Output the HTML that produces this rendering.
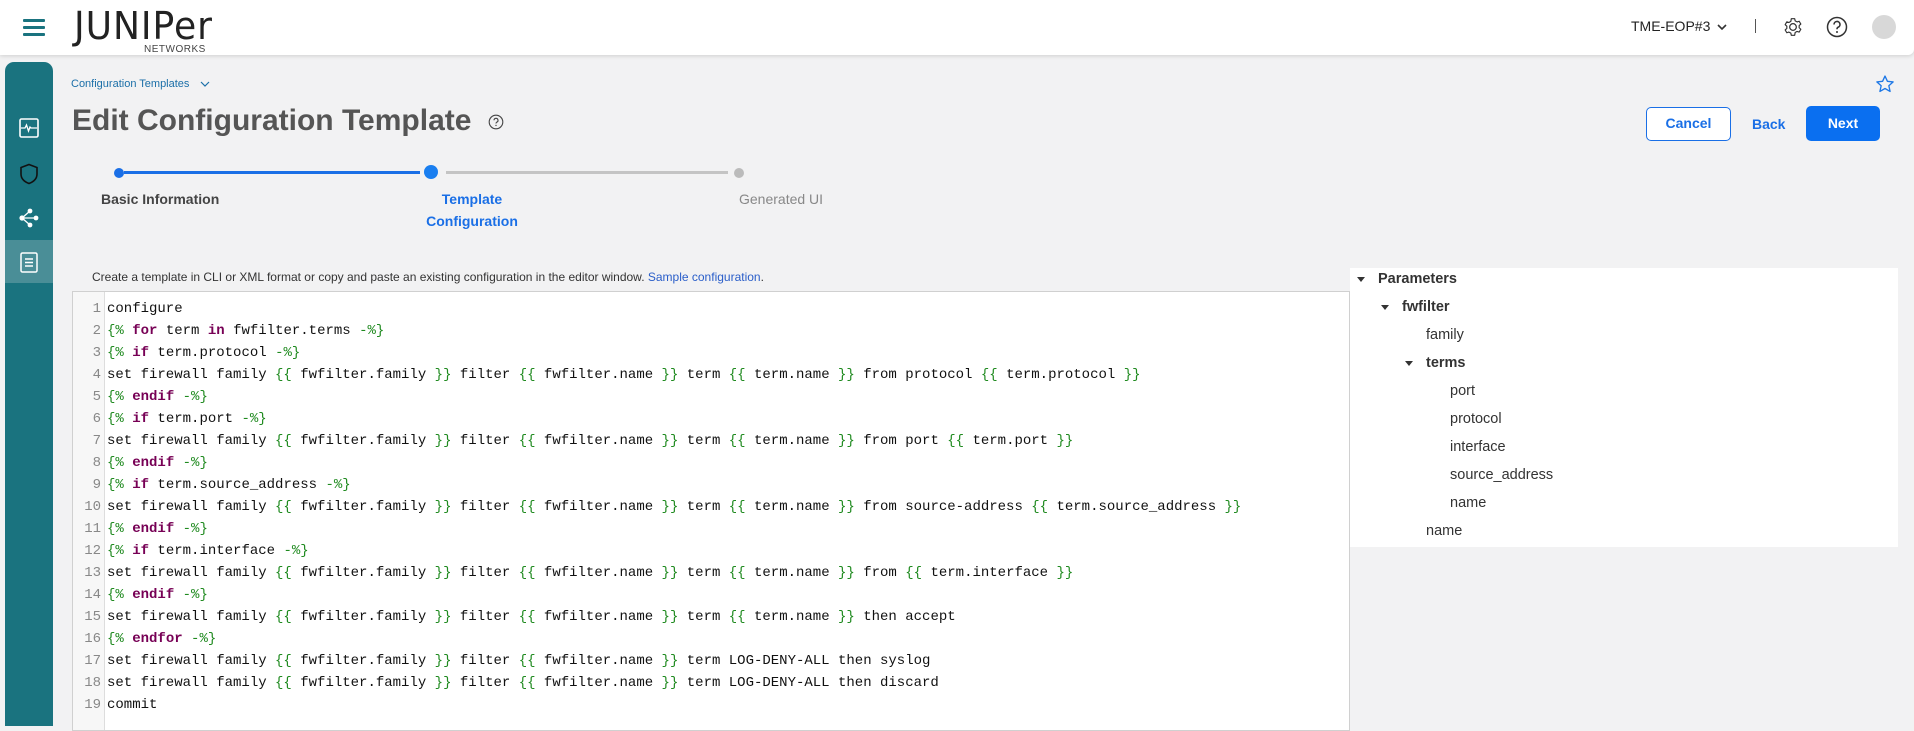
<!DOCTYPE html>
<html><head><meta charset="utf-8">
<style>
*{margin:0;padding:0;box-sizing:border-box}
body{width:1914px;height:726px;overflow:hidden;background:#f2f2f3;font-family:"Liberation Sans","DejaVu Sans",sans-serif;color:#333;position:relative}
.hdr{position:absolute;left:0;top:0;width:1914px;height:55px;background:#fff;box-shadow:0 1px 4px rgba(0,0,0,.15);border-bottom-right-radius:6px}
.abs{position:absolute}
.side{position:absolute;left:5px;top:62px;width:48px;height:664px;background:#1a737f;border-top-left-radius:9px;border-top-right-radius:9px}
.band{position:absolute;left:0;top:178px;width:48px;height:43px;background:#4a8e97}
.code{position:absolute;left:72px;top:291px;width:1278px;height:440px;background:#fff;border:1px solid #d0d0d0}
.gut{position:absolute;left:0;top:0;width:32px;height:100%;background:#f7f7f7;border-right:1px solid #ddd}
.ln{position:absolute;left:0;width:28px;text-align:right;font-family:"Liberation Mono",monospace;font-size:14px;color:#888;line-height:22px}
.cl{position:absolute;left:34px;font-family:"Liberation Mono",monospace;font-size:14px;color:#111;line-height:22px;white-space:pre}
.g{color:#1f8a1f}.k{color:#770055;font-weight:bold}
.tree{position:absolute;left:1350px;top:268px;width:548px;height:279px;background:#fff}
.ti{position:absolute;font-size:14.5px;color:#333;line-height:20px}
.tri{position:absolute;width:0;height:0;border-left:4px solid transparent;border-right:4px solid transparent;border-top:5px solid #333}
</style></head><body>
<div class="hdr">
  <div class="abs" style="left:23px;top:19px;width:22px;height:3px;background:#1a737f;border-radius:1px"></div>
  <div class="abs" style="left:23px;top:26px;width:22px;height:3px;background:#1a737f;border-radius:1px"></div>
  <div class="abs" style="left:23px;top:33px;width:22px;height:3px;background:#1a737f;border-radius:1px"></div>
  <div class="abs" style="left:74px;top:4px;font-size:38px;letter-spacing:1px;color:#222;transform:scaleX(0.95);transform-origin:left;font-family:'DejaVu Sans',sans-serif;font-weight:normal">JUNIPer</div>
  <div class="abs" style="left:144px;top:44px;font-size:10px;color:#444;letter-spacing:0.5px">NETWORKS</div>
  <div class="abs" style="left:1631px;top:18px;font-size:14px;color:#222">TME-EOP#3</div>
  <svg class="abs" style="left:1716px;top:22px" width="12" height="10"><path d="M2 3 L6 7 L10 3" fill="none" stroke="#333" stroke-width="1.6"/></svg>
  <div class="abs" style="left:1755px;top:19px;width:1px;height:14px;background:#555"></div>
  <svg class="abs" style="left:1783px;top:17px" width="20" height="20" viewBox="0 0 24 24"><path d="M12 8a4 4 0 1 0 0 8a4 4 0 1 0 0-8z" fill="none" stroke="#333" stroke-width="1.5"/><path d="M10 2h4l.6 2.6 2.3 1.3 2.5-.8 2 3.4-2 1.8v2.6l2 1.8-2 3.4-2.5-.8-2.3 1.3L14 22h-4l-.6-2.6-2.3-1.3-2.5.8-2-3.4 2-1.8V11l-2-1.8 2-3.4 2.5.8 2.3-1.3z" fill="none" stroke="#333" stroke-width="1.4" stroke-linejoin="round"/></svg>
  <svg class="abs" style="left:1826px;top:16px" width="22" height="22" viewBox="0 0 22 22"><circle cx="11" cy="11" r="9.5" fill="none" stroke="#333" stroke-width="1.5"/><path d="M8 8.5a3 3 0 1 1 4 2.8c-.8.4-1 1-1 1.9" fill="none" stroke="#333" stroke-width="1.6"/><circle cx="11" cy="16" r="1" fill="#333"/></svg>
  <div class="abs" style="left:1872px;top:15px;width:24px;height:24px;border-radius:50%;background:#d8d8d8"></div>
</div>
<div class="side">
  <div class="band"></div>
  <svg class="abs" style="left:14px;top:56px" width="20" height="20" viewBox="0 0 20 20"><rect x="1" y="1" width="18" height="18" rx="1.5" fill="none" stroke="#fff" stroke-width="1.6"/><path d="M2 10h4l1.5-3 2 6 1.5-4 1 1h6" fill="none" stroke="#fff" stroke-width="1.3"/></svg>
  <svg class="abs" style="left:14px;top:101px" width="20" height="22" viewBox="0 0 20 22"><path d="M10 1.5 L18 4.5 V11 C18 16 14 19 10 20.5 C6 19 2 16 2 11 V4.5 Z" fill="none" stroke="#111" stroke-width="1.6"/></svg>
  <svg class="abs" style="left:13px;top:145px" width="22" height="22" viewBox="0 0 22 22"><path d="M4 11 L12 4 M4 11 L18 11 M4 11 L12 18" stroke="#fff" stroke-width="1.3"/><circle cx="4" cy="11" r="2.6" fill="#fff"/><circle cx="12" cy="4" r="2.4" fill="#fff"/><circle cx="18" cy="11" r="2.4" fill="#fff"/><circle cx="12" cy="18" r="2.4" fill="#fff"/></svg>
  <svg class="abs" style="left:15px;top:190px" width="18" height="21" viewBox="0 0 18 21"><rect x="1" y="1" width="16" height="19" rx="1.5" fill="none" stroke="#fff" stroke-width="1.5"/><path d="M5 7h8M5 10.5h8M5 14h8" stroke="#fff" stroke-width="1.4"/></svg>
</div>
<div class="abs" style="left:71px;top:78px;font-size:11px;color:#1b6fa8">Configuration Templates</div>
<svg class="abs" style="left:200px;top:80px" width="10" height="8"><path d="M1 2 L5 6 L9 2" fill="none" stroke="#1b6fa8" stroke-width="1.2"/></svg>
<svg class="abs" style="left:1875px;top:74px" width="20" height="20" viewBox="0 0 24 24"><path d="M12 2.5l2.9 6.3 6.9.7-5.2 4.6 1.5 6.8L12 17.4l-6.1 3.5 1.5-6.8-5.2-4.6 6.9-.7z" fill="none" stroke="#1e78e6" stroke-width="1.6" stroke-linejoin="round"/></svg>
<div class="abs" style="left:72px;top:104px;font-size:30px;font-weight:bold;color:#555">Edit Configuration Template</div>
<svg class="abs" style="left:488px;top:114px" width="16" height="16" viewBox="0 0 16 16"><circle cx="8" cy="8" r="6.8" fill="none" stroke="#444" stroke-width="1.1"/><path d="M6 6.3a2 2 0 1 1 2.7 1.9c-.5.3-.7.6-.7 1.3" fill="none" stroke="#444" stroke-width="1.1"/><circle cx="8" cy="11.4" r=".7" fill="#444"/></svg>
<div class="abs" style="left:1646px;top:107px;width:85px;height:34px;border:1.5px solid #1a6fe6;border-radius:5px;background:#fff;color:#1a6fe6;font-weight:bold;font-size:14px;text-align:center;line-height:31px">Cancel</div>
<div class="abs" style="left:1752px;top:107px;width:34px;font-weight:bold;color:#1a6fe6;font-size:14px;line-height:34px">Back</div>
<div class="abs" style="left:1806px;top:106px;width:74px;height:35px;border-radius:5px;background:#0a6ff0;color:#fff;font-weight:bold;font-size:14px;text-align:center;line-height:35px">Next</div>
<div class="abs" style="left:124px;top:171px;width:296px;height:3px;background:#1a6fe6"></div>
<div class="abs" style="left:446px;top:171px;width:282px;height:3px;background:#c4c4c4"></div>
<div class="abs" style="left:114px;top:168px;width:10px;height:10px;border-radius:50%;background:#1a6fe6"></div>
<div class="abs" style="left:424px;top:165px;width:14px;height:14px;border-radius:50%;background:#1a7ff0"></div>
<div class="abs" style="left:734px;top:168px;width:10px;height:10px;border-radius:50%;background:#bbb"></div>
<div class="abs" style="left:101px;top:191px;font-size:14px;font-weight:bold;color:#444">Basic Information</div>
<div class="abs" style="left:400px;top:188px;width:144px;text-align:center;font-size:14px;font-weight:bold;color:#1a6fe6;line-height:22px">Template<br>Configuration</div>
<div class="abs" style="left:739px;top:191px;font-size:14px;color:#888">Generated UI</div>
<div class="abs" style="left:92px;top:270px;font-size:12px;color:#333">Create a template in CLI or XML format or copy and paste an existing configuration in the editor window. <span style="color:#2a5ec9">Sample configuration</span>.</div>
<div class="code">
<div class="gut"></div>
<div class="ln" style="top:6px">1<br>2<br>3<br>4<br>5<br>6<br>7<br>8<br>9<br>10<br>11<br>12<br>13<br>14<br>15<br>16<br>17<br>18<br>19</div>
<div class="cl" style="top:6px">configure
<span class="g">{%</span> <span class="k">for</span> term <span class="k">in</span> fwfilter.terms <span class="g">-%}</span>
<span class="g">{%</span> <span class="k">if</span> term.protocol <span class="g">-%}</span>
set firewall family <span class="g">{{</span> fwfilter.family <span class="g">}}</span> filter <span class="g">{{</span> fwfilter.name <span class="g">}}</span> term <span class="g">{{</span> term.name <span class="g">}}</span> from protocol <span class="g">{{</span> term.protocol <span class="g">}}</span>
<span class="g">{%</span> <span class="k">endif</span> <span class="g">-%}</span>
<span class="g">{%</span> <span class="k">if</span> term.port <span class="g">-%}</span>
set firewall family <span class="g">{{</span> fwfilter.family <span class="g">}}</span> filter <span class="g">{{</span> fwfilter.name <span class="g">}}</span> term <span class="g">{{</span> term.name <span class="g">}}</span> from port <span class="g">{{</span> term.port <span class="g">}}</span>
<span class="g">{%</span> <span class="k">endif</span> <span class="g">-%}</span>
<span class="g">{%</span> <span class="k">if</span> term.source_address <span class="g">-%}</span>
set firewall family <span class="g">{{</span> fwfilter.family <span class="g">}}</span> filter <span class="g">{{</span> fwfilter.name <span class="g">}}</span> term <span class="g">{{</span> term.name <span class="g">}}</span> from source-address <span class="g">{{</span> term.source_address <span class="g">}}</span>
<span class="g">{%</span> <span class="k">endif</span> <span class="g">-%}</span>
<span class="g">{%</span> <span class="k">if</span> term.interface <span class="g">-%}</span>
set firewall family <span class="g">{{</span> fwfilter.family <span class="g">}}</span> filter <span class="g">{{</span> fwfilter.name <span class="g">}}</span> term <span class="g">{{</span> term.name <span class="g">}}</span> from <span class="g">{{</span> term.interface <span class="g">}}</span>
<span class="g">{%</span> <span class="k">endif</span> <span class="g">-%}</span>
set firewall family <span class="g">{{</span> fwfilter.family <span class="g">}}</span> filter <span class="g">{{</span> fwfilter.name <span class="g">}}</span> term <span class="g">{{</span> term.name <span class="g">}}</span> then accept
<span class="g">{%</span> <span class="k">endfor</span> <span class="g">-%}</span>
set firewall family <span class="g">{{</span> fwfilter.family <span class="g">}}</span> filter <span class="g">{{</span> fwfilter.name <span class="g">}}</span> term LOG-DENY-ALL then syslog
set firewall family <span class="g">{{</span> fwfilter.family <span class="g">}}</span> filter <span class="g">{{</span> fwfilter.name <span class="g">}}</span> term LOG-DENY-ALL then discard
commit</div>
</div>
<div class="tree">
  <div class="tri" style="left:7px;top:9px"></div><div class="ti" style="left:28px;top:1px;font-weight:bold">Parameters</div>
  <div class="tri" style="left:31px;top:37px"></div><div class="ti" style="left:52px;top:29px;font-weight:bold">fwfilter</div>
  <div class="ti" style="left:76px;top:57px">family</div>
  <div class="tri" style="left:55px;top:93px"></div><div class="ti" style="left:76px;top:85px;font-weight:bold">terms</div>
  <div class="ti" style="left:100px;top:113px">port</div>
  <div class="ti" style="left:100px;top:141px">protocol</div>
  <div class="ti" style="left:100px;top:169px">interface</div>
  <div class="ti" style="left:100px;top:197px">source_address</div>
  <div class="ti" style="left:100px;top:225px">name</div>
  <div class="ti" style="left:76px;top:253px">name</div>
</div>
</body></html>
